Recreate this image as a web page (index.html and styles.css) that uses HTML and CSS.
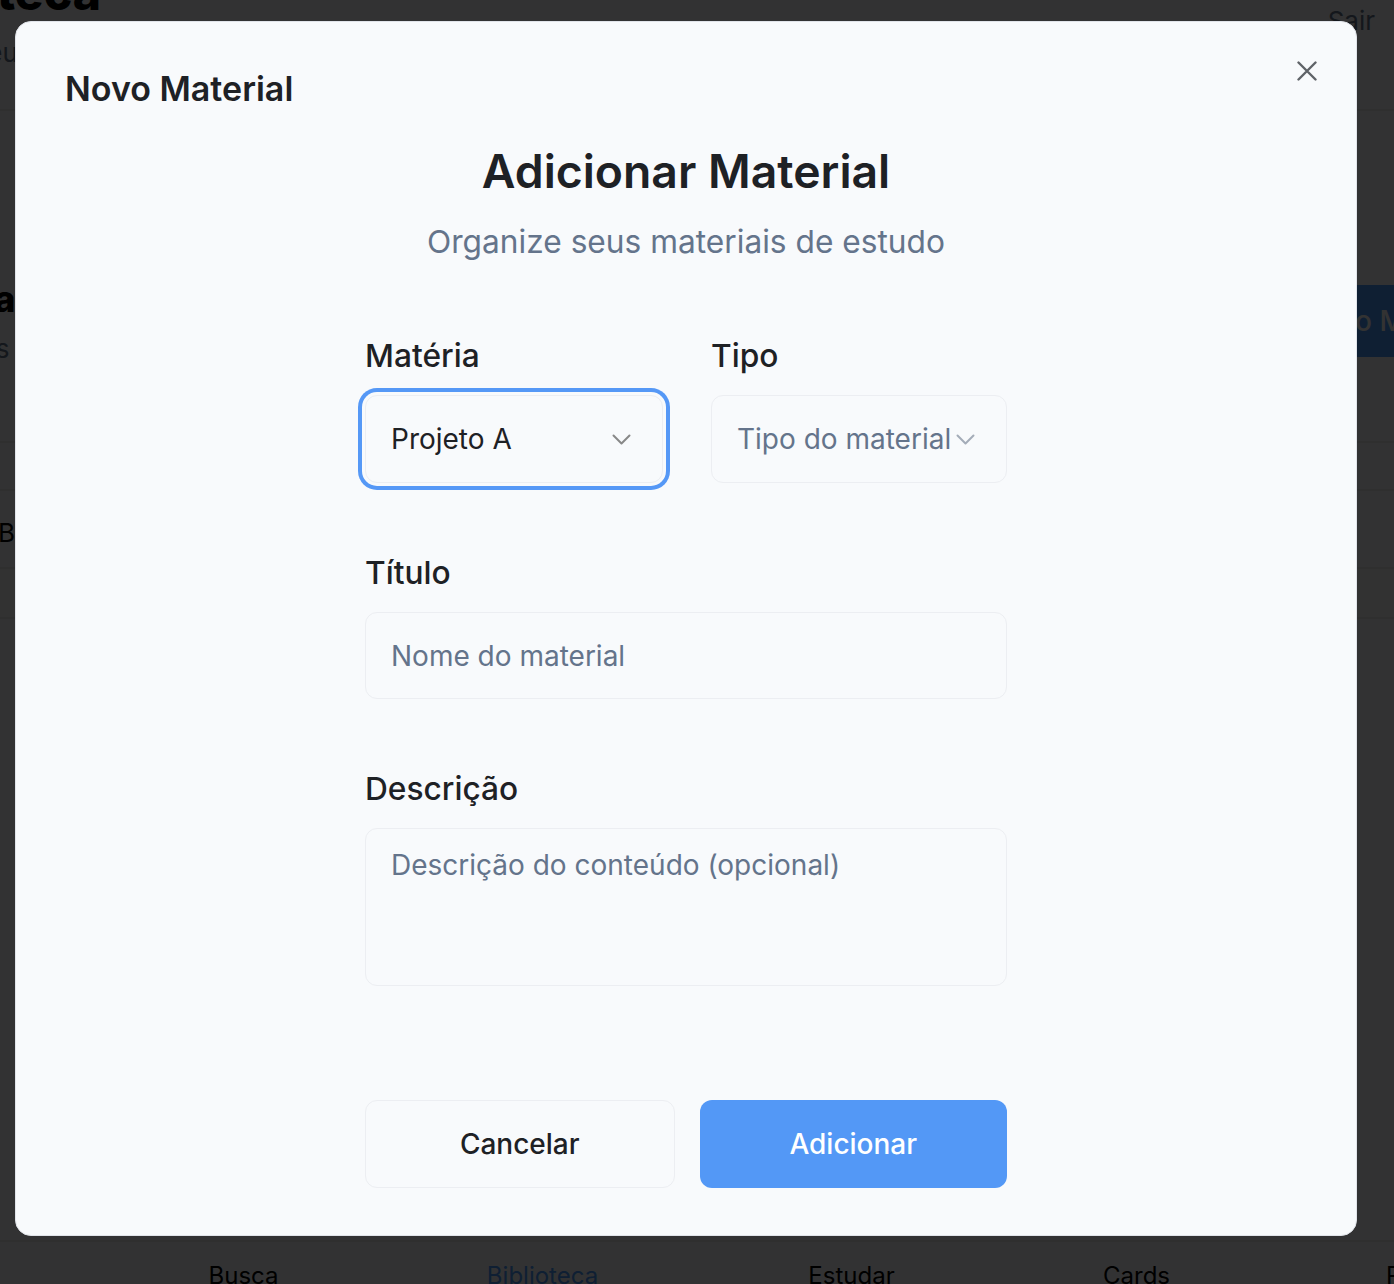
FILE: index.html
```html
<!DOCTYPE html>
<html lang="pt-BR">
<head>
<meta charset="utf-8">
<title>Novo Material</title>
<link rel="stylesheet" href="styles.css">
</head>
<body>
<div class="page">
  <header class="topbar">
    <div class="brand">
      <h1 class="brand-title">Biblioteca</h1>
      <p class="brand-sub">Todos os seus materiais de estudo</p>
    </div>
    <span class="logout">Sair</span>
  </header>
  <section class="sec-head">
    <div>
      <h2 class="sec-title">Meus materiais</h2>
      <p class="sec-sub">Confira seus conteúdos</p>
    </div>
    <span class="new-btn">Novo Material</span>
  </section>
  <div class="tabs"><span>Todos</span></div>
  <div class="row-item"><span>Biologia celular</span></div>
  <div class="row-item short"></div>
  <nav class="bottom-nav">
    <span>Busca</span>
    <span class="active">Biblioteca</span>
    <span>Estudar</span>
    <span>Cards</span>
    <span>Perfil</span>
  </nav>
</div>

<div class="backdrop"></div>

<div class="modal" role="dialog" aria-label="Novo Material">
  <h2 class="modal-title">Novo Material</h2>
  <button class="close" type="button" aria-label="Fechar">
    <svg width="20" height="20" viewBox="0 0 20 20" fill="none" stroke="currentColor" stroke-width="2.4" stroke-linecap="round"><path d="M1.5 1.5 L18.5 18.5 M18.5 1.5 L1.5 18.5"/></svg>
  </button>
  <div class="hero">
    <h1 class="hero-title">Adicionar Material</h1>
    <p class="hero-sub">Organize seus materiais de estudo</p>
  </div>
  <form class="form">
    <div class="pair">
      <div class="field">
        <label class="label">Matéria</label>
        <div class="select focused">
          <span class="value">Projeto A</span>
          <svg class="chev" width="19" height="11" viewBox="0 0 19 11" fill="none" stroke="currentColor" stroke-width="2" stroke-linecap="round" stroke-linejoin="round"><path d="M1.5 1.5 L9.5 9.5 L17.5 1.5"/></svg>
        </div>
      </div>
      <div class="field">
        <label class="label">Tipo</label>
        <div class="select">
          <span class="value ph">Tipo do material</span>
          <svg class="chev light" width="19" height="11" viewBox="0 0 19 11" fill="none" stroke="currentColor" stroke-width="2" stroke-linecap="round" stroke-linejoin="round"><path d="M1.5 1.5 L9.5 9.5 L17.5 1.5"/></svg>
        </div>
      </div>
    </div>
    <div class="field">
      <label class="label" for="titulo">Título</label>
      <input class="input" id="titulo" type="text" placeholder="Nome do material">
    </div>
    <div class="field">
      <label class="label" for="desc">Descrição</label>
      <textarea class="textarea" id="desc" placeholder="Descrição do conteúdo (opcional)"></textarea>
    </div>
    <div class="actions">
      <button class="btn ghost" type="button">Cancelar</button>
      <button class="btn primary" type="button">Adicionar</button>
    </div>
  </form>
</div>
</body>
</html>
```
FILE: styles.css
```css
* { box-sizing: border-box; }

html, body {
  margin: 0;
  height: 1284px;
  overflow: hidden;
}

body {
  font-family: Inter, "Noto Sans", sans-serif;
  background: #f8fafc;
  color: #1e2125;
}

/* ---------- underlying page ---------- */
.page {
  margin: -35px 0 0 -170px;
  width: 1780px;
  height: 1319px;
  display: flex;
  flex-direction: column;
}

.topbar {
  display: flex;
  align-items: flex-start;
  padding: 0 24px 40px;
  border-bottom: 2px solid #ececec;
}

.brand-title {
  margin: 0 0 0 10px;
  font-size: 48px;
  line-height: 56px;
  font-weight: 800;
  color: #000;
}

.brand-sub {
  margin: 16px 0 0;
  font-size: 26px;
  line-height: 32px;
  color: #64748b;
}

.logout {
  margin: 40px 211px 0 auto;
  font-size: 26px;
  color: #64748b;
}

.sec-head {
  display: flex;
  align-items: flex-start;
  justify-content: space-between;
  padding: 166px 0 0 24px;
  height: 330px;
}

.sec-title {
  margin: 0;
  font-size: 36px;
  line-height: 44px;
  font-weight: 800;
  color: #000;
}

.sec-sub {
  margin: 12px 0 0;
  font-size: 26px;
  color: #64748b;
}

.new-btn {
  margin-top: 8px;
  width: 338px;
  height: 72px;
  display: flex;
  align-items: center;
  padding-left: 30px;
  background: #4b9bff;
  color: #fff;
  font-size: 28px;
  font-weight: 500;
  border-radius: 10px 0 0 10px;
}

.tabs {
  height: 50px;
  border-top: 2px solid #ececec;
  border-bottom: 2px solid #ececec;
}
.tabs span { display: none; }

.row-item {
  height: 78px;
  padding: 26px 24px 0 168px;
  font-size: 26px;
  color: #000;
  border-bottom: 2px solid #ececec;
}
.row-item.short { height: 50px; background: #fbfbfb; }

.bottom-nav {
  margin-top: auto;
  height: 44px;
  display: flex;
  padding-left: 265px;
  border-top: 2px solid #ececec;
}
.bottom-nav span {
  width: 297px;
  flex: none;
  text-align: center;
  font-size: 24px;
  line-height: 24px;
  padding-top: 22px;
  color: #000;
}
.bottom-nav span:nth-child(2) { width: 301px; }
.bottom-nav span:nth-child(3) { width: 317px; }
.bottom-nav span:nth-child(4) { width: 253px; }
.bottom-nav span:nth-child(5) { width: 305px; }
.bottom-nav span.active { color: #4b9bff; }

/* ---------- overlay + modal ---------- */
.backdrop {
  position: fixed;
  inset: 0;
  background: rgba(0, 0, 0, 0.8);
}

.modal {
  position: fixed;
  left: 15px;
  top: 21px;
  width: 1342px;
  height: 1215px;
  background: #f8fafc;
  border: 1px solid #e1e4ea;
  border-radius: 16px;
  padding: 47px 0 0;
  display: flex;
  flex-direction: column;
  align-items: center;
}

.modal-title {
  align-self: stretch;
  margin: 0 0 0 49px;
  font-size: 34px;
  line-height: 40px;
  font-weight: 600;
  color: #1e2125;
}

.close {
  position: absolute;
  top: 39px;
  right: 39px;
  width: 20px;
  height: 20px;
  padding: 0;
  border: 0;
  background: none;
  color: #5f6368;
  display: flex;
}

.hero {
  margin-top: 32px;
  text-align: center;
}

.hero-title {
  margin: 0;
  font-size: 46.3px;
  line-height: 60px;
  font-weight: 600;
  color: #1e2125;
}

.hero-sub {
  margin: 23px 0 0;
  font-size: 31.7px;
  line-height: 36px;
  color: #64748b;
}

.form {
  margin-top: 77px;
  width: 642px;
  display: flex;
  flex-direction: column;
  gap: 71px;
}

.pair {
  display: grid;
  grid-template-columns: 298px minmax(0, 1fr);
  column-gap: 48px;
}

.field {
  display: flex;
  flex-direction: column;
  min-width: 0;
}

.label {
  font-size: 31.7px;
  line-height: 38px;
  font-weight: 500;
  color: #1e2125;
  margin-bottom: 20px;
}

.select {
  height: 88px;
  border: 1px solid #eceef2;
  border-radius: 12px;
  background: #f8fafc;
  display: flex;
  align-items: center;
  padding: 0 31px 0 25px;
  gap: 6px;
}

.select.focused {
  box-shadow: 0 0 0 3px #f8fafc, 0 0 0 7px #5598f6;
}

.value {
  flex: 1;
  min-width: 0;
  white-space: nowrap;
  overflow: hidden;
  font-size: 28px;
  color: #1e2125;
}
.value.ph { color: #64748b; }

.chev { flex: none; color: #888888; }
.chev.light { color: #a4acb8; }

.input, .textarea {
  font-family: inherit;
  font-size: 28px;
  color: #1e2125;
  background: #f8fafc;
  border: 1px solid #eceef2;
  border-radius: 12px;
  padding: 0 25px;
  outline: none;
}

.input { height: 87px; }

.textarea {
  height: 158px;
  padding-top: 18px;
  line-height: 36px;
  resize: none;
}

.input::placeholder, .textarea::placeholder { color: #64748b; opacity: 1; }

.actions {
  margin-top: 43px;
  display: flex;
  gap: 25px;
}

.btn {
  flex: 1;
  height: 88px;
  border-radius: 12px;
  font-family: inherit;
  font-size: 28px;
  font-weight: 500;
}

.btn.ghost {
  background: #f8fafc;
  border: 1px solid #eceef2;
  color: #1e2125;
}

.btn.primary {
  background: #5398f6;
  border: 0;
  color: #ffffff;
}
```
